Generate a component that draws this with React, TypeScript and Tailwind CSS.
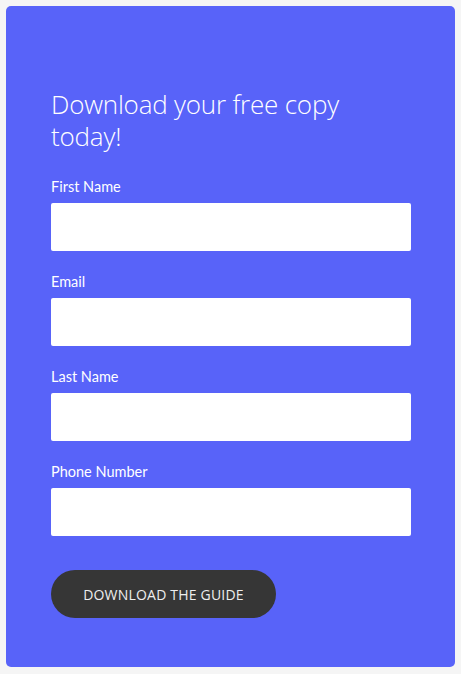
import React from "react";

const fields = ["First Name", "Email", "Last Name", "Phone Number"];

export default function App() {
  return (
    <div className="min-h-screen w-full bg-[#f5f5f5] p-[6px]" style={{ height: 674 }}>
      <div className="flex h-[661px] w-[449px] flex-col rounded-[5px] bg-[#5863f9] pl-[45px] pr-[44px] pt-[82px]">
        <h1 className="font-['Open_Sans',sans-serif] text-[26px] font-light leading-[32px] tracking-[-0.2px] text-white">
          Download your free copy today!
        </h1>
        <div className="mt-[25px] flex flex-col gap-[21px]">
          {fields.map((f) => (
            <div key={f} className="flex flex-col">
              <label className="mb-[6px] font-['Lato',sans-serif] text-[14.5px] leading-[20px] text-white">
                {f}
              </label>
              <input className="h-[48px] w-full rounded-[2px] bg-white outline-none" />
            </div>
          ))}
        </div>
        <div className="mt-[34px]">
          <button className="h-[48px] w-[225px] rounded-full bg-[#363636] font-['Open_Sans',sans-serif] text-[14px] tracking-[0.2px] text-[#eeeeee]">
            DOWNLOAD THE GUIDE
          </button>
        </div>
      </div>
    </div>
  );
}
